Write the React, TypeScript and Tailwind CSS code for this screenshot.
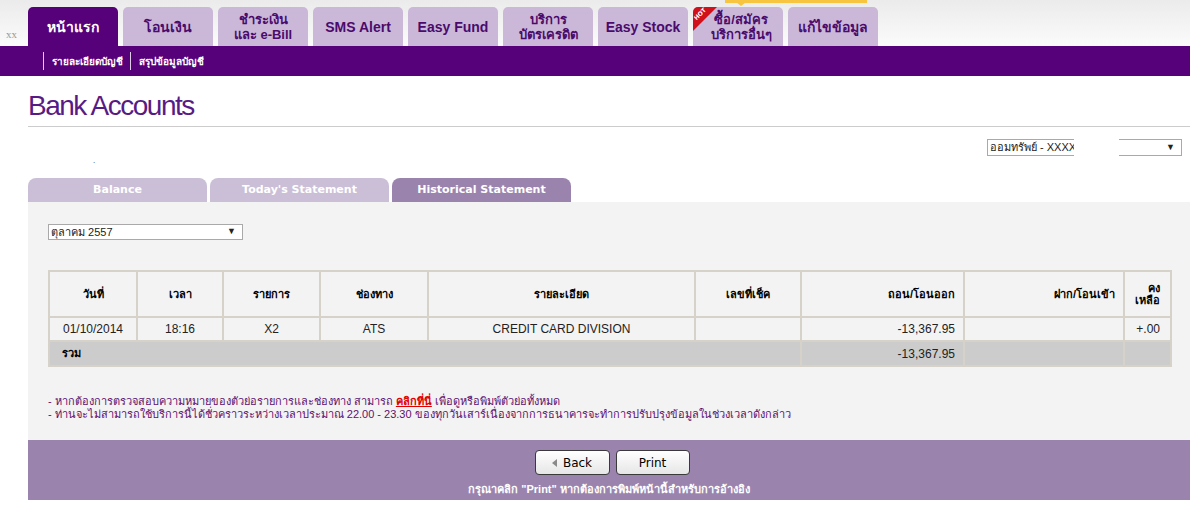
import React from "react";

interface MenuTab {
  label: string[];
  active?: boolean;
  hot?: boolean;
}

const menuTabs: MenuTab[] = [
  { label: ["หน้าแรก"], active: true },
  { label: ["โอนเงิน"] },
  { label: ["ชำระเงิน", "และ e-Bill"] },
  { label: ["SMS Alert"] },
  { label: ["Easy Fund"] },
  { label: ["บริการ", "บัตรเครดิต"] },
  { label: ["Easy Stock"] },
  { label: ["ซื้อ/สมัคร", "บริการอื่นๆ"], hot: true },
  { label: ["แก้ไขข้อมูล"] },
];

const columns = [
  { title: ["วันที่"], width: 86, align: "text-center" },
  { title: ["เวลา"], width: 84, align: "text-center" },
  { title: ["รายการ"], width: 95, align: "text-center" },
  { title: ["ช่องทาง"], width: 106, align: "text-center" },
  { title: ["รายละเอียด"], width: 265, align: "text-center" },
  { title: ["เลขที่เช็ค"], width: 104, align: "text-center" },
  { title: ["ถอน/โอนออก"], width: 161, align: "text-right pr-[8px]" },
  { title: ["ฝาก/โอนเข้า"], width: 158, align: "text-right pr-[8px]" },
  { title: ["คง", "เหลือ"], width: 45, align: "text-right pr-[10px]" },
];

const row = ["01/10/2014", "18:16", "X2", "ATS", "CREDIT CARD DIVISION", "", "-13,367.95", "", "+.00"];

function TopMenu() {
  return (
    <header className="relative h-[46px] bg-gradient-to-b from-[#ebebeb] to-[#fbfbfb] flex items-end">
      <span className="absolute left-[6px] top-[29px] text-[11px] leading-none text-[#9a9a9a] font-['Liberation_Serif',serif]">xx</span>
      <nav className="ml-[28px] flex gap-[5px]">
        {menuTabs.map((t) => (
          <div
            key={t.label.join(" ")}
            className={`relative w-[90px] h-[39px] rounded-t-[5px] flex flex-col items-center justify-center overflow-hidden ${
              t.active ? "bg-[#56007a] text-white" : "bg-[#cbb8d9] text-[#4a0b6c]"
            } ${t.hot ? "pl-[6px]" : ""}`}
          >
            {t.hot && (
              <div className="absolute left-0 top-0 w-[24px] h-[24px] bg-[#d0111b] [clip-path:polygon(0_0,100%_0,0_100%)]">
                <span className="absolute left-[7px] top-[7px] -translate-x-1/2 -translate-y-1/2 -rotate-45 text-[6px] font-bold text-white leading-none font-['DejaVu_Sans',sans-serif]">
                  HOT
                </span>
              </div>
            )}
            {t.label.map((l) => (
              <span key={l} className={`${t.label.length > 1 ? "text-[13px] leading-[15px]" : "text-[14px] leading-[16px]"} font-bold whitespace-nowrap`}>
                {l}
              </span>
            ))}
          </div>
        ))}
      </nav>
      {/* yellow notice strip above the tabs */}
      <div className="absolute left-[725px] top-0 w-[142px] h-[3px] bg-[#f7c540]">
        <div className="absolute left-[11px] top-[2px] w-0 h-0 border-l-[5px] border-r-[5px] border-t-[4px] border-l-transparent border-r-transparent border-t-[#f7c540]" />
      </div>
    </header>
  );
}

function SubMenu() {
  return (
    <div className="h-[30px] bg-[#56007a] flex items-center pl-[43px] text-[10px] font-bold text-white">
      <span className="w-px h-[18px] bg-white/80" />
      <span className="ml-[8px] mr-[7px]">รายละเอียดบัญชี</span>
      <span className="w-px h-[18px] bg-white/80" />
      <span className="ml-[8px]">สรุปข้อมูลบัญชี</span>
    </div>
  );
}

export default function App() {
  return (
    <div className="w-[1190px] bg-white font-['Liberation_Sans',sans-serif]">
      <TopMenu />
      <SubMenu />

      <div className="pl-[28px]">
        <h1 className="pt-[13px] h-[50px] text-[28px] leading-[34px] tracking-[-1.5px] text-[#581b85]">Bank Accounts</h1>
        <div className="h-px bg-[#cccccc]" />

        <div className="relative h-[51px]">
          <div className="absolute left-[959px] top-[12px] w-[195px] h-[17px] border border-[#a9a9a9] bg-white flex items-center pl-[2px] text-[11px] text-[#222]">
            ออมทรัพย์ - XXXX
            <span className="ml-auto mr-[6px] text-[9px]">▼</span>
          </div>
          {/* masked part of the account number */}
          <div className="absolute left-[1046px] top-[10px] w-[45px] h-[21px] bg-white" />
          <span className="absolute left-[65px] top-[30px] text-[8px] leading-none text-[#333]">.</span>
        </div>

        <div className="flex gap-[3px] h-[24px]">
          {[
            ["Balance", false],
            ["Today's Statement", false],
            ["Historical Statement", true],
          ].map(([label, active]) => (
            <div
              key={label as string}
              className={`w-[179px] rounded-t-[8px] flex items-center justify-center text-[11px] font-bold text-white font-['DejaVu_Sans',sans-serif] ${
                active ? "bg-[#9a84ae]" : "bg-[#cbbfd7]"
              }`}
            >
              {label}
            </div>
          ))}
        </div>

        <section className="bg-[#f3f3f3] h-[238px] pl-[20px] pt-[22px]">
          <div className="w-[195px] h-[16px] border border-[#a9a9a9] bg-white flex items-center pl-[2px] text-[11px] text-[#222]">
            ตุลาคม 2557
            <span className="ml-auto mr-[6px] text-[9px]">▼</span>
          </div>

          <table className="mt-[30px] w-[1124px] table-fixed border-separate border-spacing-[2px] bg-[#d6d2ca]">
            <colgroup>
              {columns.map((c, i) => (
                <col key={i} style={{ width: c.width }} />
              ))}
            </colgroup>
            <thead>
              <tr>
                {columns.map((c, i) => (
                  <th key={i} className={`h-[44px] bg-[#f3f3f3] text-[11px] leading-[12px] font-bold text-black ${c.align}`}>
                    {c.title.map((t) => (
                      <div key={t}>{t}</div>
                    ))}
                  </th>
                ))}
              </tr>
            </thead>
            <tbody>
              <tr>
                {row.map((v, i) => (
                  <td key={i} className={`h-[22px] bg-[#f3f3f3] text-[12px] text-[#222] ${columns[i].align}`}>
                    {v}
                  </td>
                ))}
              </tr>
              <tr>
                <td colSpan={6} className="h-[23px] bg-[#cccccc] pl-[12px] text-[11px] font-bold text-black">รวม</td>
                <td className="bg-[#cccccc] text-right pr-[8px] text-[12px] text-[#222]">-13,367.95</td>
                <td className="bg-[#cccccc]" />
                <td className="bg-[#cccccc]" />
              </tr>
            </tbody>
          </table>

          <div className="mt-[28px] text-[11px] leading-[13px] text-[#5e0f6e]">
            <p>
              - หากต้องการตรวจสอบความหมายของตัวย่อรายการและช่องทาง สามารถ{" "}
              <a className="text-[#e00000] font-bold underline">คลิกที่นี่</a> เพื่อดูหรือพิมพ์ตัวย่อทั้งหมด
            </p>
            <p>- ท่านจะไม่สามารถใช้บริการนี้ได้ชั่วคราวระหว่างเวลาประมาณ 22.00 - 23.30 ของทุกวันเสาร์เนื่องจากการธนาคารจะทำการปรับปรุงข้อมูลในช่วงเวลาดังกล่าว</p>
          </div>
        </section>

        <footer className="h-[60px] bg-[#9a84ae] flex flex-col items-center pt-[10px]">
          <div className="flex gap-[6px] ml-[6px]">
            <button className="w-[75px] h-[25px] rounded-[4px] border border-[#3a3a3a] bg-gradient-to-b from-white to-[#e6e6e6] flex items-center justify-center gap-[6px] text-[12px] text-black font-['DejaVu_Sans',sans-serif]">
              <span className="w-0 h-0 border-t-[4px] border-b-[4px] border-r-[5px] border-t-transparent border-b-transparent border-r-[#8a8a8a]" />
              Back
            </button>
            <button className="w-[74px] h-[25px] rounded-[4px] border border-[#3a3a3a] bg-gradient-to-b from-white to-[#e6e6e6] text-[12px] text-black font-['DejaVu_Sans',sans-serif]">
              Print
            </button>
          </div>
          <p className="mt-[6px] text-[11px] font-bold text-white">กรุณาคลิก "Print" หากต้องการพิมพ์หน้านี้สำหรับการอ้างอิง</p>
        </footer>
      </div>
    </div>
  );
}
